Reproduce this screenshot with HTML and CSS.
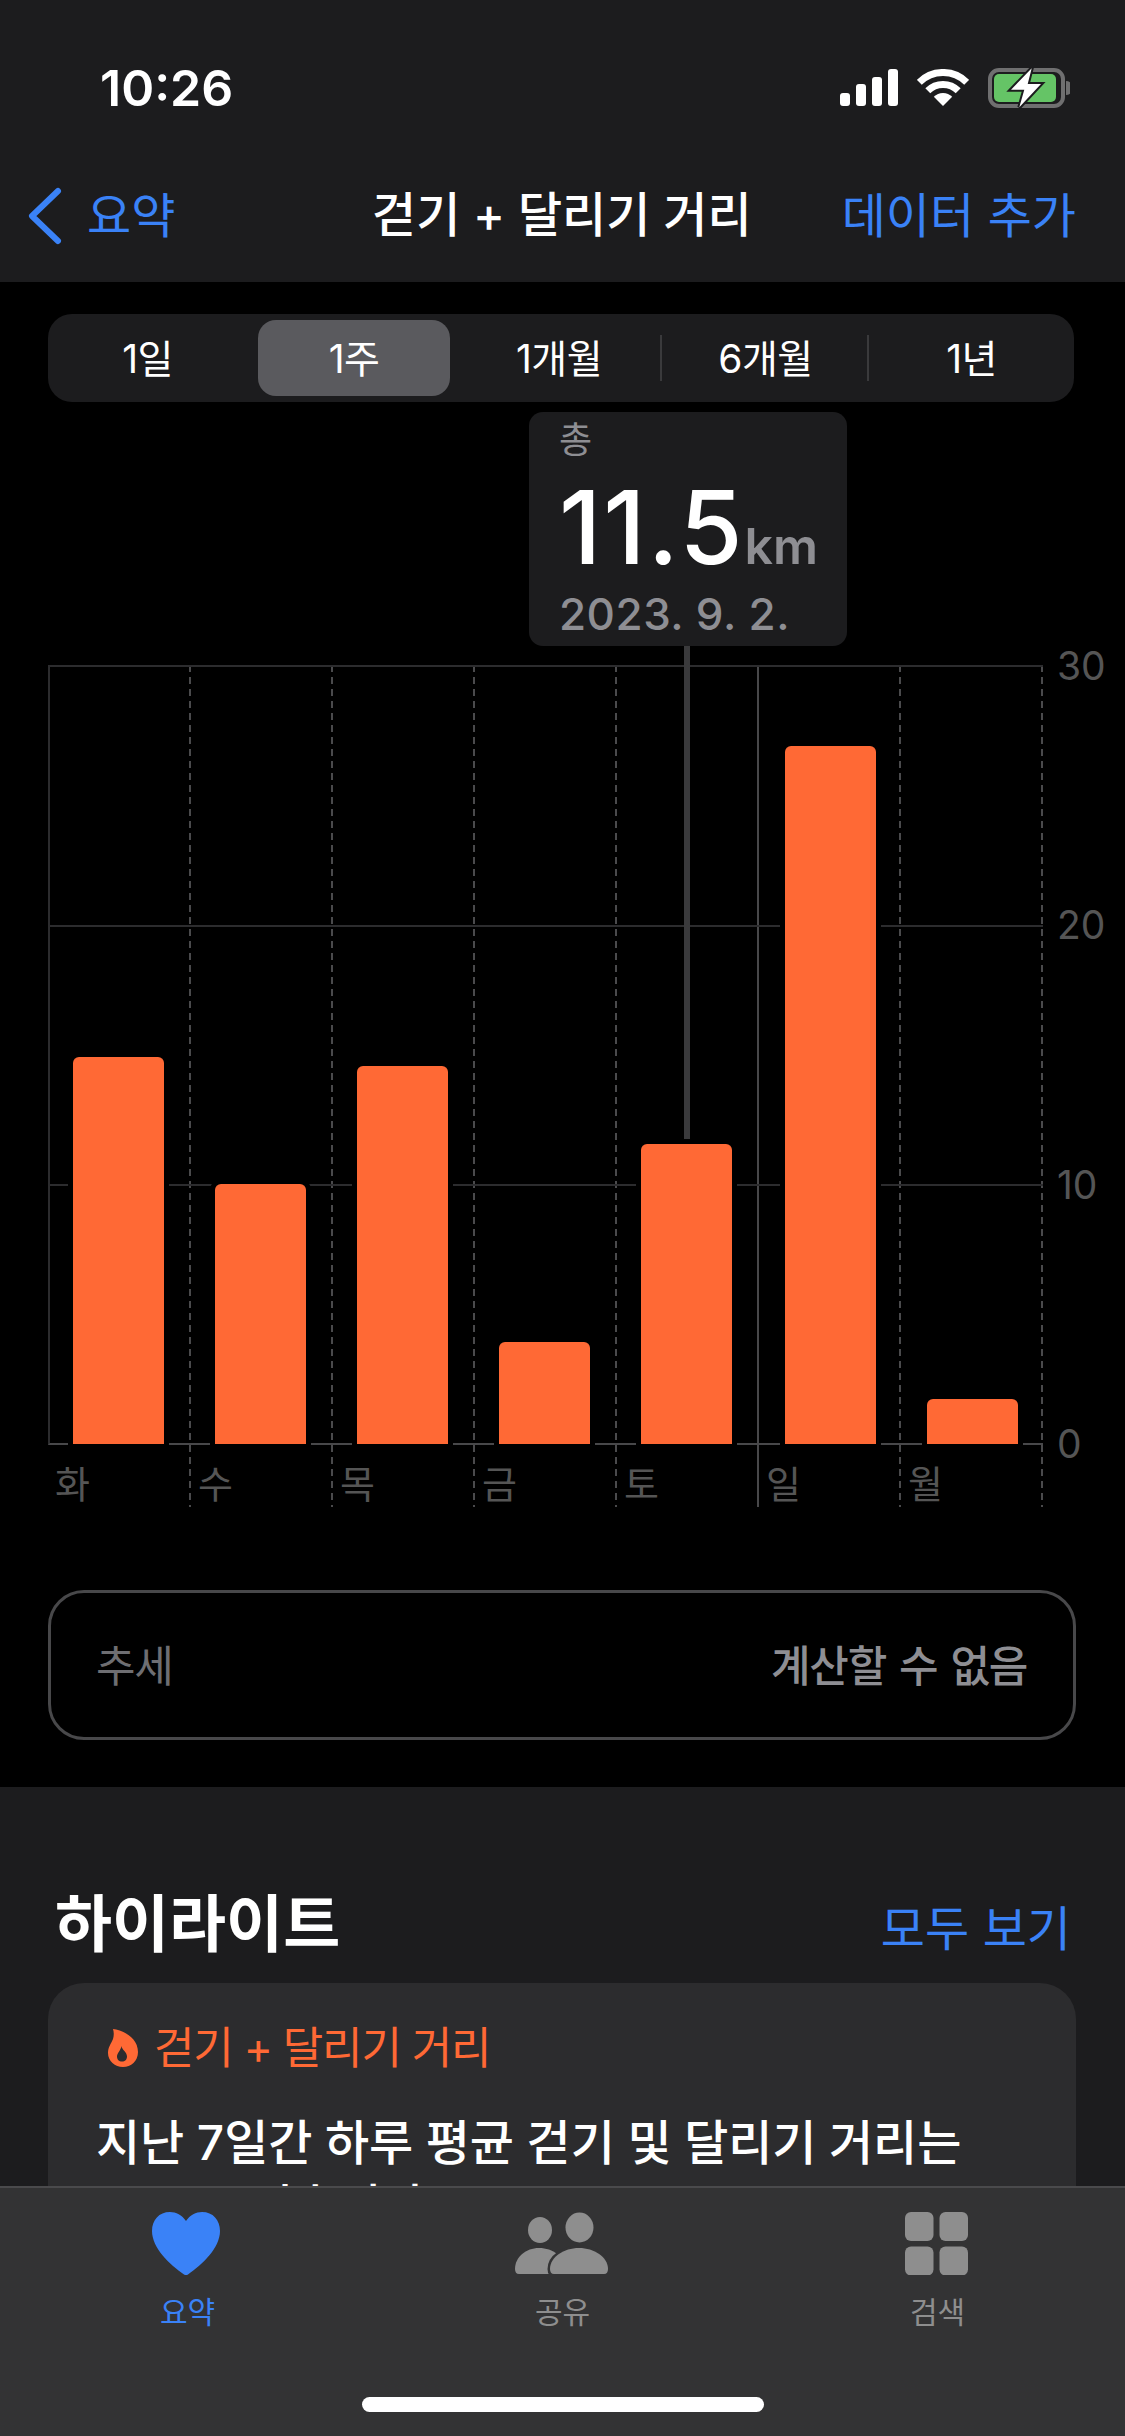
FILE: index.html
```html
<!DOCTYPE html>
<html lang="ko">
<head>
    <meta charset="UTF-8">
    <title>걷기 + 달리기 거리</title>
    <link rel="stylesheet" href="styles.css">
</head>
<body>

<div class="phone">
    <!--상단 헤더-->
    <header class="header">
        <div class="status">
            <span class="time">10:26</span>
            <div class="status-icons">
                <svg class="signal" width="58" height="37" viewBox="0 0 58 37">
                    <rect x="0" y="24" width="10" height="13" rx="3"/>
                    <rect x="16" y="15" width="10" height="22" rx="3"/>
                    <rect x="32" y="8" width="10" height="29" rx="3"/>
                    <rect x="48" y="0" width="10" height="37" rx="3"/>
                </svg>
                <svg class="wifi" width="52" height="37" viewBox="0 0 52 37">
                    <path d="M2.3 13.3A33.5 33.5 0 0 1 49.7 13.3" fill="none" stroke="#fff" stroke-width="7"/>
                    <path d="M10.8 21.8A21.5 21.5 0 0 1 41.2 21.8" fill="none" stroke="#fff" stroke-width="7"/>
                    <path d="M26 37L16.8 27.8A13 13 0 0 1 35.2 27.8Z" fill="#fff"/>
                </svg>
                <svg class="battery" width="82" height="42" viewBox="0 0 82 42">
                    <rect x="2" y="3" width="73" height="36" rx="9" fill="none" stroke="#6f6f70" stroke-width="4"/>
                    <rect x="6" y="7" width="62" height="28" rx="5" fill="#65c466"/>
                    <path d="M78 14a7 7 0 0 1 0 14Z" fill="#6f6f70"/>
                    <path class="bolt" d="M43.7 1.3L23 22.7H36.3L31.3 40.3L53 17H39.7Z"/>
                </svg>
            </div>
        </div>
        <nav class="nav">
            <a class="back" href="#">
                <svg width="36" height="60" viewBox="0 0 36 60">
                    <path d="M31 5L5 30L31 55" fill="none" stroke="#3a82f7" stroke-width="6" stroke-linecap="round" stroke-linejoin="round"/>
                </svg>
                <span>요약</span>
            </a>
            <h1 class="title">걷기 + 달리기 거리</h1>
            <a class="add" href="#">데이터 추가</a>
        </nav>
    </header>

    <main class="detail">
        <!--기간 선택-->
        <div class="segment">
            <span class="seg seg-first">1일</span>
            <span class="seg current"><b>1주</b></span>
            <span class="seg sep">1개월</span>
            <span class="seg sep">6개월</span>
            <span class="seg">1년</span>
        </div>

        <!--차트-->
        <div class="chart">
            <div class="tip">
                <div class="tip-label">총</div>
                <div class="tip-value">11.5<small>km</small></div>
                <div class="tip-date">2023. 9. 2.</div>
            </div>
            <div class="plot">
                <div class="day">
                    <div class="slot first"><i class="bar" style="height: 387px"></i></div>
                    <span>화</span>
                </div>
                <div class="day">
                    <div class="slot"><i class="bar" style="height: 260px"></i></div>
                    <span>수</span>
                </div>
                <div class="day">
                    <div class="slot"><i class="bar" style="height: 378px"></i></div>
                    <span>목</span>
                </div>
                <div class="day">
                    <div class="slot"><i class="bar" style="height: 102px"></i></div>
                    <span>금</span>
                </div>
                <div class="day solid">
                    <div class="slot"><i class="bar picked" style="height: 300px"></i></div>
                    <span>토</span>
                </div>
                <div class="day">
                    <div class="slot wide"><i class="bar" style="height: 698px"></i></div>
                    <span>일</span>
                </div>
                <div class="day">
                    <div class="slot wide"><i class="bar" style="height: 45px"></i></div>
                    <span>월</span>
                </div>
            </div>
            <div class="axis">
                <span>30</span>
                <span>20</span>
                <span>10</span>
                <span>0</span>
            </div>
        </div>

        <div class="trend">
            <span class="trend-name">추세</span>
            <span class="trend-value">계산할 수 없음</span>
        </div>
    </main>

    <section class="highlights">
        <div class="section-head">
            <h2>하이라이트</h2>
            <a href="#">모두 보기</a>
        </div>
        <div class="card">
            <div class="card-title">
                <svg width="30" height="38" viewBox="0 0 30 38">
                    <path fill-rule="evenodd" d="M5 0C14 1 30 8 30 23C30 32 23 38 15 38C7 38 0 32 0 24C0 18 3 15 5 10C6 7 6 3 5 0ZM13.500 17C14 21 19 23 19 27.500C19 30.500 17 32.500 14 32.500C11 32.500 9 30.500 9 27.500C9 24 13 21 13.500 17Z"/>
                </svg>
                <span>걷기 + 달리기 거리</span>
            </div>
            <p>지난 7일간 하루 평균 걷기 및 달리기 거리는 11.9km였습니다.</p>
        </div>
    </section>

    <!--하단 탭바-->
    <footer class="tabbar">
        <a class="tab active" href="#">
            <svg width="68" height="63" viewBox="0 0 68 63">
                <path d="M34 9C30 3 24 0 18 0C7 0 0 8 0 19C0 36 18 53 32 62.4Q34 63.4 36 62.4C50 53 68 36 68 19C68 8 61 0 50 0C44 0 38 3 34 9Z"/>
            </svg>
            <span>요약</span>
        </a>
        <a class="tab" href="#">
            <svg width="93" height="63" viewBox="0 0 93 63">
                <ellipse cx="25" cy="18" rx="12" ry="13"/>
                <ellipse cx="64.5" cy="15.5" rx="14" ry="15"/>
                <path d="M0 57C0 45 11 36 24 36C38 36 50 45 50 57Q50 62 46 62H4Q0 62 0 57Z"/>
                <path class="cut" d="M35 57C35 45 49 36 64 36C79 36 93 45 93 57Q93 62 89 62H39Q35 62 35 57Z"/>
            </svg>
            <span>공유</span>
        </a>
        <a class="tab" href="#">
            <svg width="63" height="63" viewBox="0 0 63 63">
                <rect x="0" y="0" width="28.5" height="29" rx="6"/>
                <rect x="34.5" y="0" width="28.5" height="29" rx="6"/>
                <rect x="0" y="34.500" width="28.5" height="29" rx="6"/>
                <rect x="34.5" y="34.500" width="28.5" height="29" rx="6"/>
            </svg>
            <span>검색</span>
        </a>
        <div class="home-bar"></div>
    </footer>
</div>

</body>
</html>
```

FILE: styles.css
```css
* {
    margin: 0;
    padding: 0;
    box-sizing: border-box;
}

html, body {
    background-color: #000;
}

body {
    font-family: Inter, "Noto Sans CJK KR", sans-serif;
    color: #fff;
}

a {
    text-decoration: none;
    color: inherit;
}

.phone {
    width: 1125px;
    height: 2436px;
    position: relative;
    overflow: hidden;
    background-color: #000;
}

/* header */
.header {
    height: 282px;
    background-color: #1c1c1e;
}

.status {
    height: 141px;
    padding: 62px 55px 0 100px;
    display: flex;
    justify-content: space-between;
    align-items: flex-start;
}

.time {
    font-size: 50px;
    line-height: 52px;
    font-weight: 600;
}

.status-icons {
    display: flex;
    align-items: flex-start;
    margin-top: 7px;
}

.signal {
    fill: #fff;
    margin-right: 19px;
}

.wifi {
    margin-right: 19px;
}

.battery {
    margin-top: -2px;
}

.bolt {
    fill: #fff;
    stroke: #1c1c1e;
    stroke-width: 4;
    paint-order: stroke;
}

.nav {
    height: 141px;
    padding: 0 49px 0 27px;
    display: flex;
    justify-content: space-between;
    align-items: flex-start;
    position: relative;
    font-size: 48px;
    line-height: 64px;
}

.back {
    display: flex;
    align-items: center;
    color: #3a82f7;
    margin-top: 43px;
}

.back span {
    margin-left: 24px;
}

.title {
    position: absolute;
    left: 372px;
    top: 42px;
    font-size: 48px;
    font-weight: 500;
    white-space: nowrap;
}

.add {
    margin-top: 43px;
    color: #3a82f7;
}

/* period segment */
.detail {
    height: 1505px;
    padding: 32px 0 0 48px;
}

.segment {
    width: 1026px;
    height: 88px;
    background-color: #1c1c1e;
    border-radius: 24px;
    display: grid;
    grid-template-columns: 204px 204px 206px 207px 205px;
    font-size: 39px;
    letter-spacing: -0.5px;
}

.seg {
    display: flex;
    align-items: center;
    justify-content: center;
    padding-bottom: 4px;
}

.seg-first {
    padding-right: 5px;
}

.seg.current {
    padding: 6px;
}

.seg.current b {
    width: 100%;
    height: 100%;
    padding-bottom: 4px;
    display: flex;
    align-items: center;
    justify-content: center;
    font-weight: 400;
    background-color: #5a5a5e;
    border-radius: 18px;
}

.seg.sep {
    background: linear-gradient(#3a3a3c, #3a3a3c) right center / 2px 46px no-repeat;
}

/* chart */
.chart {
    position: relative;
    margin-top: 263px;
    display: flex;
}

.tip {
    position: absolute;
    left: 481px;
    top: -253px;
    width: 318px;
    height: 234px;
    padding: 8px 30px 0;
    background-color: #1c1c1e;
    border-radius: 14px;
    z-index: 2;
}

.tip-label {
    font-size: 36px;
    line-height: 40px;
    color: #8e8e93;
}

.tip-value {
    height: 112px;
    margin-top: 11px;
    font-size: 102px;
    line-height: 112px;
    font-weight: 500;
    letter-spacing: 2px;
    white-space: nowrap;
}

.tip-value small {
    font-size: 50px;
    line-height: 1;
    font-weight: 600;
    letter-spacing: 0;
    color: #8e8e93;
}

.tip-date {
    margin-top: 5px;
    font-size: 44px;
    line-height: 52px;
    font-weight: 500;
    letter-spacing: 0.5px;
    color: #8e8e93;
}

.plot {
    width: 995px;
    display: grid;
    grid-template-columns: 143px repeat(6, 142px);
}

.day {
    --line: repeating-linear-gradient(to bottom, #4a4a4c 0 7px, transparent 7px 12px);
    background: var(--line) right top / 2px 100% no-repeat;
}

.day.solid {
    --line: linear-gradient(#48484a, #48484a);
}

.day span {
    display: block;
    height: 62px;
    padding: 14px 0 0 7px;
    font-size: 38px;
    line-height: 50px;
    color: #555;
}

.slot {
    height: 780px;
    padding-left: 24px;
    display: flex;
    align-items: flex-end;
    border-top: 2px solid #2c2c2e;
    border-bottom: 2px solid #48484a;
    background: repeating-linear-gradient(to bottom, transparent 0 258px, #2c2c2e 258px 260px, transparent 260px 517px, #2c2c2e 517px 519px) left top no-repeat;
}

.slot.first {
    border-left: 2px solid #2c2c2e;
    padding-left: 23px;
}

.slot.wide {
    padding-left: 26px;
}

/* 막대 주위로 검은 여백이 있어서 그리드 선이 끊어져 보임 */
.bar {
    display: block;
    position: relative;
    width: 91px;
    margin-bottom: -1px;
    background-color: #ff6935;
    border-radius: 6px 6px 0 0;
    box-shadow: 0 0 0 5px #000;
}

.bar.picked::before {
    content: "";
    position: absolute;
    left: 43px;
    bottom: 100%;
    width: 6px;
    height: 493px;
    margin-bottom: 5px;
    background-color: #3a3a3c;
}

.axis {
    height: 832px;
    margin-top: -26px;
    margin-left: 14px;
    display: flex;
    flex-direction: column;
    justify-content: space-between;
    font-size: 39px;
    line-height: 54px;
    color: #555;
}

/* trend box */
.trend {
    width: 1028px;
    height: 150px;
    margin-top: 83px;
    padding: 0 46px 0 45px;
    border: 3px solid #48484a;
    border-radius: 36px;
    display: flex;
    justify-content: space-between;
    align-items: center;
    font-size: 43px;
    letter-spacing: -1.3px;
    word-spacing: 3px;
}

.trend-name {
    color: #6e6e72;
    margin-top: -5px;
}

.trend-value {
    color: #8e8e93;
    font-weight: 500;
    margin-top: -5px;
}

/* highlights */
.highlights {
    height: 649px;
    padding: 100px 49px 0 48px;
    background-color: #1c1c1e;
}

.section-head {
    display: flex;
    justify-content: space-between;
    align-items: flex-start;
    height: 96px;
    padding: 0 5px 0 7px;
}

.section-head h2 {
    font-size: 62px;
    line-height: 76px;
    font-weight: 700;
}

.section-head a {
    margin-top: 7px;
    font-size: 48px;
    line-height: 70px;
    color: #3a82f7;
}

.card {
    width: 1028px;
    height: 300px;
    padding: 40px 48px;
    background-color: #2c2c2e;
    border-radius: 36px;
}

.card-title {
    display: flex;
    align-items: center;
    gap: 16px;
    margin-left: 12px;
    font-size: 44px;
    line-height: 50px;
    letter-spacing: -1.2px;
    color: #ff6935;
    fill: #ff6935;
}

.card p {
    margin-top: 38px;
    font-size: 48px;
    line-height: 64px;
    font-weight: 500;
    letter-spacing: -0.1px;
}

/* tab bar */
.tabbar {
    position: absolute;
    left: 0;
    bottom: 0;
    width: 1125px;
    height: 250px;
    padding-top: 24px;
    display: flex;
    align-items: flex-start;
    background-color: #333334;
    border-top: 2px solid #4a4a4c;
}

.tab {
    flex: 1;
    display: flex;
    flex-direction: column;
    align-items: center;
    font-size: 30px;
    line-height: 40px;
    color: #8e8e8e;
    fill: #8e8e8e;
}

.tab svg {
    display: block;
    margin: 0 0 17px -3px;
}

.tab.active {
    color: #3a82f7;
    fill: #3a82f7;
}

.cut {
    stroke: #333334;
    stroke-width: 5;
    paint-order: stroke;
}

.home-bar {
    position: absolute;
    left: 362px;
    bottom: 24px;
    width: 402px;
    height: 15px;
    background-color: #fff;
    border-radius: 8px;
}
```
